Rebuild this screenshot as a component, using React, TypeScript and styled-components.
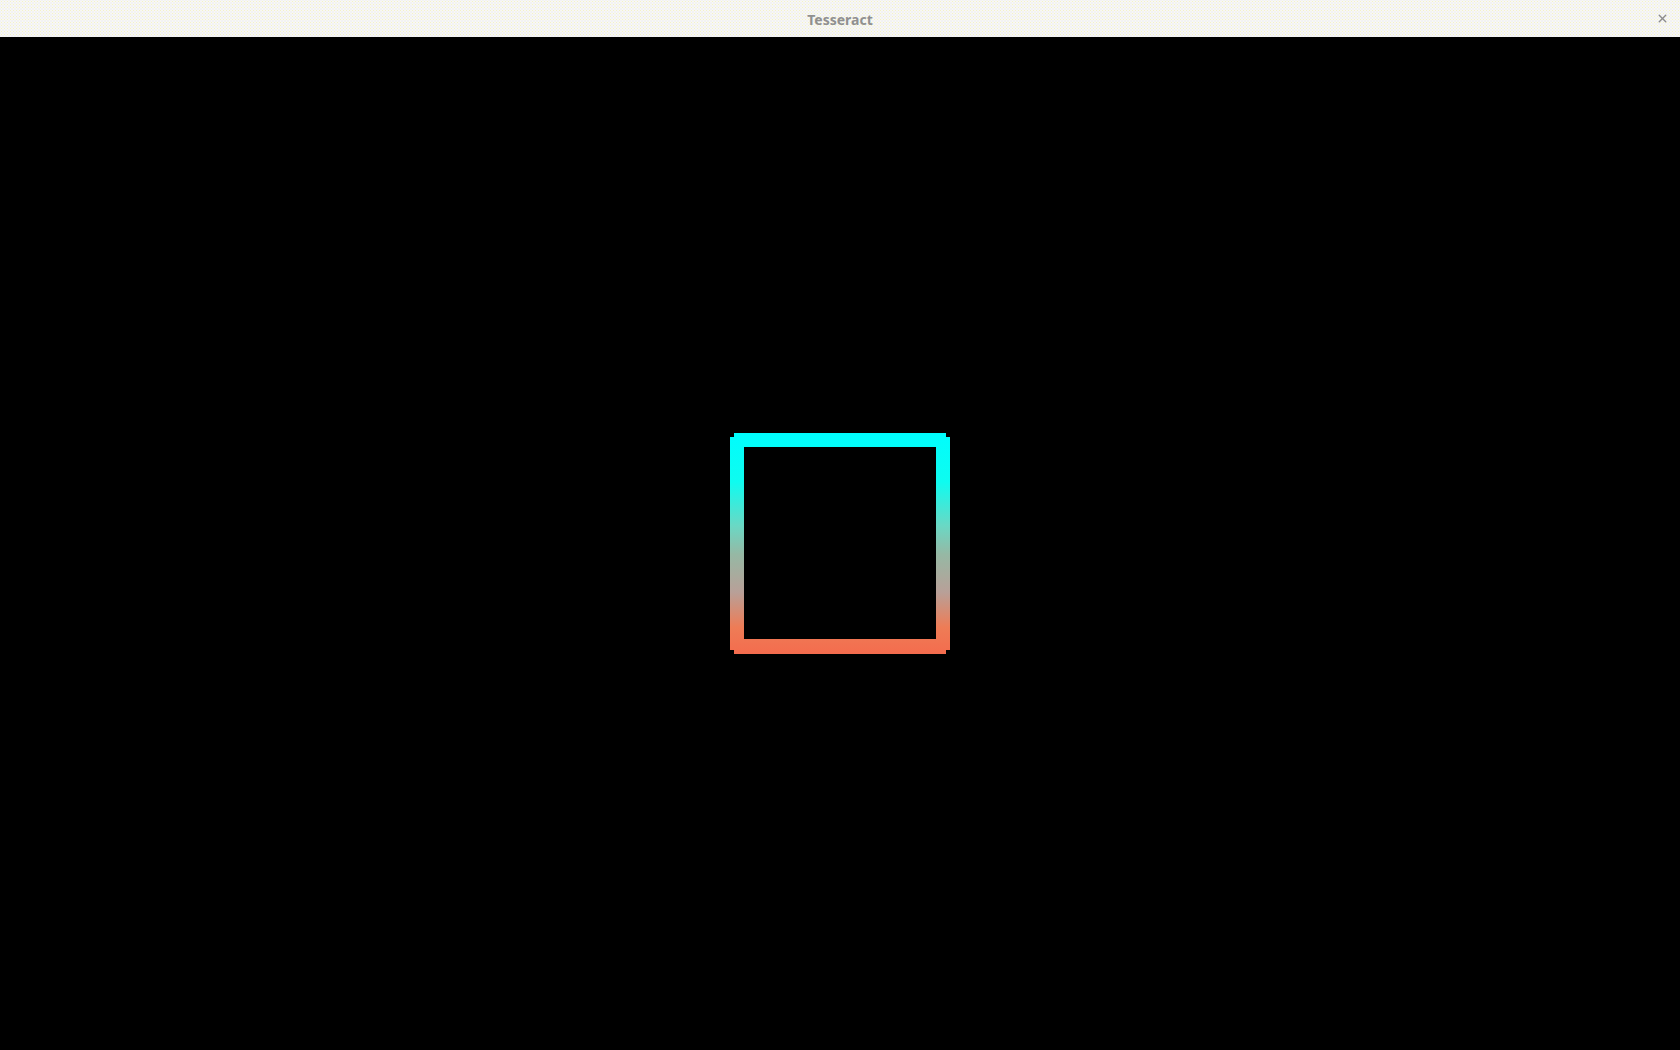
import React from "react";
import styled, { createGlobalStyle } from "styled-components";
import { X } from "lucide-react";

const Global = createGlobalStyle`
  html, body {
    margin: 0;
    padding: 0;
    background: #000;
    font-family: "Noto Sans", "Liberation Sans", sans-serif;
  }
`;

const Window = styled.div`
  display: flex;
  flex-direction: column;
  width: 100vw;
  height: 100vh;
  overflow: hidden;
  background: #000;
`;

const TitleBar = styled.div`
  flex: 0 0 37px;
  display: grid;
  grid-template-columns: 1fr auto 1fr;
  align-items: center;
  background-color: #f8f8f4;
  background-image: radial-gradient(circle, rgba(236, 232, 150, 0.45) 0.6px, transparent 0.8px),
    radial-gradient(circle, rgba(196, 196, 240, 0.45) 0.6px, transparent 0.8px);
  background-size: 3px 3px, 3px 3px;
  background-position: 0 0, 1.5px 1.5px;
`;

const Title = styled.div`
  grid-column: 2;
  font-size: 14px;
  font-weight: 700;
  color: #909090;
  padding-top: 1px;
`;

const Close = styled.button`
  grid-column: 3;
  justify-self: end;
  margin-right: 10px;
  width: 16px;
  height: 16px;
  padding: 0;
  display: flex;
  align-items: center;
  justify-content: center;
  border: none;
  background: none;
  color: #8c8c8c;
  cursor: pointer;
`;

const Stage = styled.div`
  flex: 1;
  display: flex;
  align-items: center;
  justify-content: center;
`;

const Shape = styled.svg`
  display: block;
`;

const W = 220;
const H = 221;
const T = 14;
const N = 4;

const outer = `M${N} 0 H${W - N} V${N} H${W} V${H - N} H${W - N} V${H} H${N} V${H - N} H0 V${N} H${N} Z`;
const inner = `M${T} ${T} H${W - T} V${H - T - 1} H${T} Z`;

export default function App() {
  return (
    <>
      <Global />
      <Window>
        <TitleBar>
          <Title>Tesseract</Title>
          <Close aria-label="close">
            <X size={13} strokeWidth={2.6} />
          </Close>
        </TitleBar>
        <Stage>
          <Shape width={W} height={H} viewBox={`0 0 ${W} ${H}`}>
            <defs>
              <linearGradient id="edge" x1="0" y1="0" x2="0" y2="1">
                <stop offset="0" stopColor="#00fdfd" />
                <stop offset="0.22" stopColor="#0efcf0" />
                <stop offset="0.42" stopColor="#6ad8c4" />
                <stop offset="0.55" stopColor="#96b8a4" />
                <stop offset="0.72" stopColor="#b8a098" />
                <stop offset="0.88" stopColor="#ee7c56" />
                <stop offset="1" stopColor="#f46c4e" />
              </linearGradient>
            </defs>
            <path d={`${outer} ${inner}`} fill="url(#edge)" fillRule="evenodd" />
          </Shape>
        </Stage>
      </Window>
    </>
  );
}
